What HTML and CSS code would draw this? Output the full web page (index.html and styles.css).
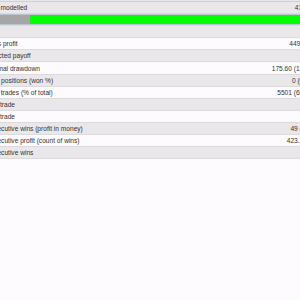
FILE: index.html
```html
<!DOCTYPE html>
<html>
<head>
<meta charset="utf-8">
<link rel="stylesheet" href="styles.css">
</head>
<body>
<div class="report">
  <div class="stub"></div>
  <div class="row alt"><span class="label">Ticks modelled</span><span class="value">4128356</span></div>
  <div class="row barrow"><div class="bar"><div class="bar-gray"></div><div class="bar-green"></div></div></div>
  <div class="row alt"><span class="label"></span><span class="value"></span></div>
  <div class="row"><span class="label">Gross profit</span><span class="value">449125.30</span></div>
  <div class="row alt"><span class="label">Expected payoff</span><span class="value"></span></div>
  <div class="row"><span class="label">Maximal drawdown</span><span class="value">175.60 (17.56%)</span></div>
  <div class="row alt"><span class="label">Short positions (won %)</span><span class="value">0 (0.00%)</span></div>
  <div class="row"><span class="label">Profit trades (% of total)</span><span class="value">5501 (68.42%)</span></div>
  <div class="row alt"><span class="label">profit trade</span><span class="value"></span></div>
  <div class="row"><span class="label">profit trade</span><span class="value"></span></div>
  <div class="row alt"><span class="label">consecutive wins (profit in money)</span><span class="value">49 (35.20)</span></div>
  <div class="row"><span class="label">consecutive profit (count of wins)</span><span class="value">423.20 (12)</span></div>
  <div class="row alt"><span class="label">consecutive wins</span><span class="value"></span></div>
</div>
</body>
</html>
```
FILE: styles.css
```css
html, body {
  margin: 0;
  padding: 0;
  background: #fdfbfd;
  overflow: hidden;
  width: 300px;
  height: 300px;
}
.report {
  margin-left: -17px;
  width: 337.5px;
  font-family: "Liberation Sans", Arial, sans-serif;
  font-size: 6.6px;
  color: #333333;
}
.stub {
  height: 1px;
  background: #e8e6e8;
  border-bottom: 1px solid #d2d0d2;
}
.row {
  box-sizing: border-box;
  height: 12.1px;
  border-bottom: 1px solid #dcdadc;
  display: flex;
  align-items: center;
  justify-content: space-between;
  background: #fdfbfd;
  white-space: nowrap;
}
.row.alt {
  background: #e9e7e9;
}
.label {
  padding-left: 0.5px;
}
.value {
  text-align: right;
}
.barrow {
  background: #eeecee;
}
.bar {
  box-sizing: border-box;
  width: 100%;
  height: 11px;
  border-top: 1px solid #b9c6d2;
  border-bottom: 1px solid #b9c6d2;
  display: flex;
}
.bar-gray {
  width: 47px;
  background: #a6a6a6;
}
.bar-green {
  flex: 1;
  background: #00ff00;
}
```
